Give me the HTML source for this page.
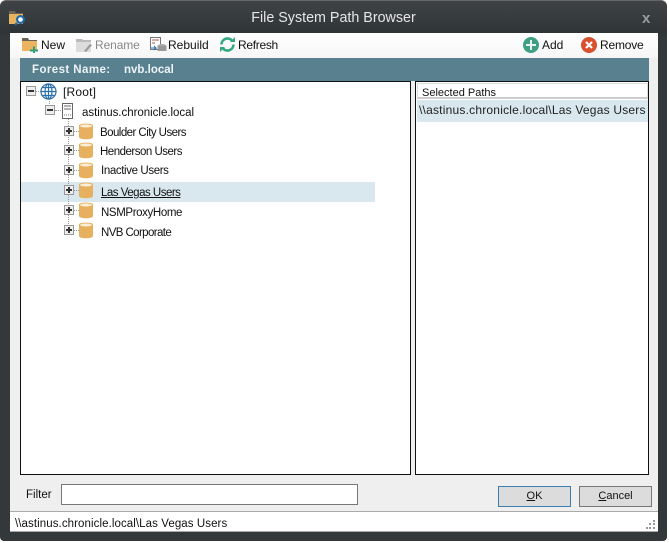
<!DOCTYPE html>
<html><head><meta charset="utf-8"><style>
html,body{margin:0;padding:0;background:#fff;width:669px;height:543px;overflow:hidden}
body{position:relative;font-family:"Liberation Sans",sans-serif;font-size:12px;color:#111}
div,span,svg{position:absolute}
.t{white-space:nowrap;line-height:14px}
.tb{font-size:12px;letter-spacing:0;}
.exp{width:10px;height:10px;border:1px solid #999;background:#eee;box-sizing:border-box}
.exp:before{content:"";position:absolute;left:1px;top:3px;width:6px;height:2px;background:#333}
.plus:after{content:"";position:absolute;left:3px;top:1px;width:2px;height:6px;background:#333}
.dv{border-left:1px dotted #999;width:0}
.dh{border-top:1px dotted #999;height:0}
.n{font-size:11.500px}
</style></head><body>
<div style="left:0;top:0;width:667px;height:541px;background:linear-gradient(#3f4345 0,#2f3436 33px,#33383a 34px);border-radius:6px 6px 4px 4px;border-top:1px solid #666;box-sizing:border-box"></div>
<svg style="left:9px;top:10px" width="17" height="16" viewBox="0 0 17 16"><path d="M0 1h6l1 2h7v3H0z" fill="#6d6255"/><path d="M0 4h14v10H0z" fill="#e9b25e"/><circle cx="11.500" cy="9.500" r="4.500" fill="#1c6aa8"/><circle cx="11.500" cy="9.500" r="2.300" fill="#fff"/><path d="M8 13l-2 2" stroke="#1c6aa8" stroke-width="2"/></svg>
<div class="t" style="left:0;top:10px;width:667px;text-align:center;color:#e6e6e6;font-size:14.300px;line-height:17px;">File System Path Browser</div>
<div class="t" style="left:642px;top:12px;color:#9a9d9e;font-size:15px;font-weight:bold">x</div>

<div style="left:10px;top:33px;width:648px;height:499px;background:#efefef"></div>
<div style="left:10px;top:33px;width:648px;height:25px;background:linear-gradient(#fff,#f6f6f6)"></div>

<svg style="left:22px;top:38px" width="17" height="15" viewBox="0 0 17 15"><path d="M0 0h6l1 2h8v3H0z" fill="#6b6155"/><path d="M0 3h15v10H0z" fill="#ecb45f"/><path d="M11 8.500h2v3h3v2h-3v1.500h-2v-1.500H8v-2h3z" fill="#2f9e78"/></svg>
<div class="t tb" style="left:41px;top:38px">New</div>
<svg style="left:76px;top:38px" width="17" height="15" viewBox="0 0 17 15"><path d="M0 1h6l1 1h8v3H0z" fill="#bbb"/><path d="M0 4h15v10H0z" fill="#dcdcdc"/><path d="M8 13l6-7 2 1-6 7z" fill="#9a9a9a"/></svg>
<div class="t tb" style="left:95px;top:38px;color:#888;letter-spacing:-.1px">Rename</div>
<svg style="left:150px;top:37px" width="17" height="16" viewBox="0 0 17 16"><rect x=".5" y=".5" width="10" height="12" fill="#fff" stroke="#777"/><path d="M2 3h7M2 6h3" stroke="#b55" /><ellipse cx="12" cy="9" rx="4.500" ry="2" fill="#aaa"/><rect x="7.500" y="9" width="9" height="5" fill="#999"/><path d="M1 11h5l-2-2M6 11l-2 2" stroke="#2a6fb0" fill="none"/></svg>
<div class="t tb" style="left:168px;top:38px">Rebuild</div>
<svg style="left:219px;top:36px" width="17" height="17" viewBox="0 0 17 17"><path d="M2.500 8.500a6 6 0 0 1 10.500-4M14.500 8.500a6 6 0 0 1-10.500 4" fill="none" stroke="#34a883" stroke-width="2.600"/><path d="M11 6h5V1zM6 11H1v5z" fill="#34a883"/></svg>
<div class="t tb" style="left:238px;top:38px;letter-spacing:-.3px">Refresh</div>
<svg style="left:523px;top:37px" width="16" height="16" viewBox="0 0 16 16"><circle cx="8" cy="8" r="8" fill="#3f9f82"/><path d="M7 3h2v4h4v2H9v4H7V9H3V7h4z" fill="#e8f4f0"/></svg>
<div class="t tb" style="left:542px;top:38px">Add</div>
<svg style="left:581px;top:37px" width="16" height="16" viewBox="0 0 16 16"><circle cx="8" cy="8" r="8" fill="#d9502f"/><path d="M5 5l6 6M11 5l-6 6" stroke="#fff" stroke-width="2.200"/></svg>
<div class="t tb" style="left:600px;top:38px;letter-spacing:-.2px">Remove</div>

<div style="left:20px;top:58px;width:629px;height:23px;background:#58808f"></div>
<div class="t" style="left:32px;top:63px;color:#eef3f5;font-weight:bold;font-size:11.500px;letter-spacing:.42px">Forest Name:</div>
<div class="t" style="left:124px;top:63px;color:#eef3f5;font-weight:bold;font-size:11.500px">nvb.local</div>

<div style="left:20px;top:81px;width:391px;height:394px;background:#fff;border:1px solid #111;box-sizing:border-box"></div>
<div style="left:415px;top:81px;width:234px;height:394px;background:#fff;border:1px solid #111;box-sizing:border-box"></div>
<div style="left:417px;top:83px;width:231px;height:16px;background:#fff;border:1px solid #ddd;border-bottom:2px solid #ccc;box-sizing:border-box"></div>
<div class="t" style="left:422px;top:86px;font-size:11px;">Selected Paths</div>
<div style="left:417px;top:100px;width:231px;height:22px;background:#d9e8ef"></div>
<div class="t" style="left:419px;top:103px;font-size:12px;letter-spacing:.21px;color:#222">\\astinus.chronicle.local\Las Vegas Users</div>

<div style="left:21px;top:182px;width:354px;height:20px;background:#d9e8ef"></div>

<div class="dh" style="left:36px;top:91px;width:5px"></div>
<div class="dv" style="left:49px;top:99px;height:7px"></div>
<div class="dh" style="left:55px;top:110px;width:6px"></div>
<div class="dv" style="left:68px;top:118px;height:110px"></div>
<div class="dh" style="left:74px;top:131px;width:5px"></div>
<div class="dh" style="left:74px;top:150px;width:5px"></div>
<div class="dh" style="left:74px;top:170px;width:5px"></div>
<div class="dh" style="left:74px;top:190px;width:5px"></div>
<div class="dh" style="left:74px;top:210px;width:5px"></div>
<div class="dh" style="left:74px;top:230px;width:5px"></div>

<div class="exp" style="left:26px;top:86px"></div>
<svg style="left:40px;top:83px" width="17" height="17" viewBox="0 0 17 17" fill="none" stroke="#2c6fa8" stroke-width="1.200"><circle cx="8.500" cy="8.500" r="7.500"/><ellipse cx="8.500" cy="8.500" rx="3.500" ry="7.500"/><path d="M1 8.500h15M2 4.500h13M2 12.500h13M8.500 1v15"/></svg>
<div class="t" style="left:63px;top:85px;font-size:12px;letter-spacing:.2px">[Root]</div>

<div class="exp" style="left:45px;top:105px"></div>
<svg style="left:62px;top:103px" width="12" height="17" viewBox="0 0 12 17"><rect x=".5" y=".5" width="10" height="15" fill="#fff" stroke="#666"/><path d="M2 3h7M2 6h7" stroke="#666"/><path d="M2 12h7" stroke="#777" stroke-dasharray="1 1"/></svg>
<div class="t" style="left:82px;top:106px;font-size:11.500px;letter-spacing:-.02px">astinus.chronicle.local</div>

<div class="exp plus" style="left:64px;top:126px"></div>
<div class="exp plus" style="left:64px;top:145px"></div>
<div class="exp plus" style="left:64px;top:165px"></div>
<div class="exp plus" style="left:64px;top:185px"></div>
<div class="exp plus" style="left:64px;top:205px"></div>
<div class="exp plus" style="left:64px;top:225px"></div>

<svg style="left:79px;top:123px" width="14" height="17" viewBox="0 0 14 17"><path d="M0 2.500C0 0 14 0 14 2.500V14C14 17 0 17 0 14z" fill="#e6b05f"/><ellipse cx="7" cy="3" rx="6" ry="1.500" fill="#fbeed6"/></svg>
<svg style="left:79px;top:142px" width="14" height="17" viewBox="0 0 14 17"><path d="M0 2.500C0 0 14 0 14 2.500V14C14 17 0 17 0 14z" fill="#e6b05f"/><ellipse cx="7" cy="3" rx="6" ry="1.500" fill="#fbeed6"/></svg>
<svg style="left:79px;top:162px" width="14" height="17" viewBox="0 0 14 17"><path d="M0 2.500C0 0 14 0 14 2.500V14C14 17 0 17 0 14z" fill="#e6b05f"/><ellipse cx="7" cy="3" rx="6" ry="1.500" fill="#fbeed6"/></svg>
<svg style="left:79px;top:182px" width="14" height="17" viewBox="0 0 14 17"><path d="M0 2.500C0 0 14 0 14 2.500V14C14 17 0 17 0 14z" fill="#e6b05f"/><ellipse cx="7" cy="3" rx="6" ry="1.500" fill="#fbeed6"/></svg>
<svg style="left:79px;top:202px" width="14" height="17" viewBox="0 0 14 17"><path d="M0 2.500C0 0 14 0 14 2.500V14C14 17 0 17 0 14z" fill="#e6b05f"/><ellipse cx="7" cy="3" rx="6" ry="1.500" fill="#fbeed6"/></svg>
<svg style="left:79px;top:222px" width="14" height="17" viewBox="0 0 14 17"><path d="M0 2.500C0 0 14 0 14 2.500V14C14 17 0 17 0 14z" fill="#e6b05f"/><ellipse cx="7" cy="3" rx="6" ry="1.500" fill="#fbeed6"/></svg>

<div class="t n" style="left:100px;top:126px;letter-spacing:-.55px">Boulder City Users</div>
<div class="t n" style="left:100px;top:145px;letter-spacing:-.5px">Henderson Users</div>
<div class="t n" style="left:101px;top:164px;letter-spacing:-.38px">Inactive Users</div>
<div class="t n" style="left:101px;top:186px;letter-spacing:-.5px;text-decoration:underline">Las Vegas Users</div>
<div class="t n" style="left:101px;top:206px;letter-spacing:-.38px">NSMProxyHome</div>
<div class="t n" style="left:101px;top:226px;letter-spacing:-.6px">NVB Corporate</div>

<div class="t" style="left:26px;top:488px;font-size:11.500px">Filter</div>
<div style="left:61px;top:484px;width:297px;height:21px;background:#fff;border:1px solid #777;box-sizing:border-box"></div>
<div style="left:498px;top:486px;width:73px;height:21px;background:#dcdcdc;border:1px solid #3b7fb0;box-sizing:border-box"></div>
<div class="t" style="left:498px;top:489px;width:73px;text-align:center;font-size:11px"><u>O</u>K</div>
<div style="left:579px;top:486px;width:73px;height:21px;background:#dcdcdc;border:1px solid #777;box-sizing:border-box"></div>
<div class="t" style="left:579px;top:489px;width:73px;text-align:center;font-size:11px"><u>C</u>ancel</div>

<div style="left:10px;top:511px;width:648px;height:21px;background:#fff;border-top:1px solid #aaa;border-bottom:1px solid #aaa;box-sizing:border-box"></div>
<div class="t" style="left:15px;top:517px;font-size:11.500px;letter-spacing:.08px">\\astinus.chronicle.local\Las Vegas Users</div>
<svg style="left:645px;top:520px" width="11" height="10" viewBox="0 0 11 10" fill="#999"><rect x="8" y="0" width="2" height="2"/><rect x="4" y="3" width="2" height="2"/><rect x="8" y="3" width="2" height="2"/><rect x="1" y="7" width="2" height="2"/><rect x="4" y="7" width="2" height="2"/><rect x="8" y="7" width="2" height="2"/></svg>
</body></html>
